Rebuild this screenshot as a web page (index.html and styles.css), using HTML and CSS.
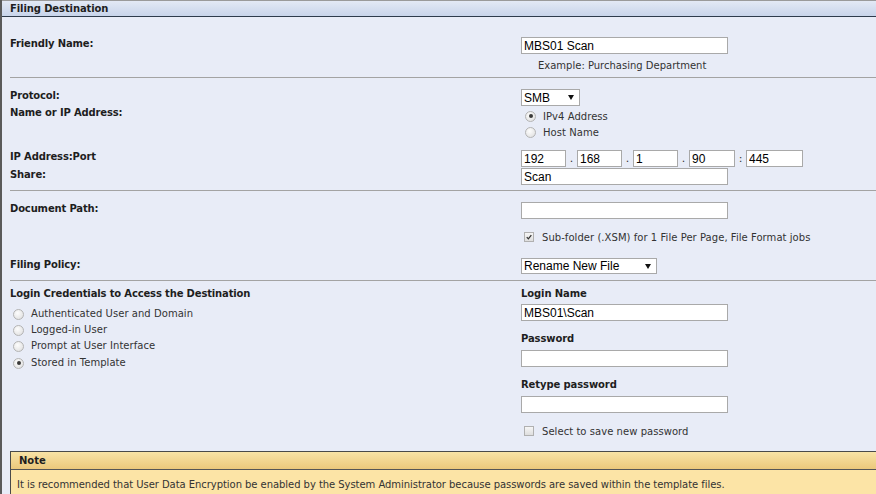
FILE: index.html
```html
<!DOCTYPE html>
<html>
<head>
<meta charset="utf-8">
<link rel="stylesheet" href="styles.css">
</head>
<body>
<div class="panel">
  <div class="panel-head">Filing Destination</div>
  <div class="panel-body">
    <section class="sec sec1">
      <div class="row">
        <div class="lbl">Friendly Name:</div>
        <div class="fld">
          <input class="txt w207" type="text" value="MBS01 Scan">
          <div class="hint">Example: Purchasing Department</div>
        </div>
      </div>
    </section>

    <section class="sec sec2">
      <div class="row">
        <div class="lbl">Protocol:</div>
        <div class="fld">
          <div class="sel w59"><span>SMB</span><i class="arrow"></i></div>
        </div>
      </div>
      <div class="row">
        <div class="lbl">Name or IP Address:</div>
        <div class="fld">
          <div class="radios radios-r">
            <div class="opt"><span class="radio on"></span><span>IPv4 Address</span></div>
            <div class="opt"><span class="radio"></span><span>Host Name</span></div>
          </div>
        </div>
      </div>
      <div class="row row-ip">
        <div class="lbl">IP Address:Port</div>
        <div class="fld ip">
          <input class="txt w45" type="text" value="192"><span class="sep">.</span>
          <input class="txt w45" type="text" value="168"><span class="sep">.</span>
          <input class="txt w45" type="text" value="1"><span class="sep">.</span>
          <input class="txt w46" type="text" value="90"><span class="sep">:</span>
          <input class="txt w57" type="text" value="445">
        </div>
      </div>
      <div class="row row-share">
        <div class="lbl">Share:</div>
        <div class="fld">
          <input class="txt w207" type="text" value="Scan">
        </div>
      </div>
    </section>

    <section class="sec sec3">
      <div class="row">
        <div class="lbl">Document Path:</div>
        <div class="fld">
          <input class="txt w207" type="text" value="">
          <div class="opt chk-row"><span class="check on"><svg viewBox="0 0 10 10" width="10" height="10"><path d="M2.2 5.2 L4.2 7.3 L7.9 2.6" fill="none" stroke="#333" stroke-width="1.6"/></svg></span><span>Sub-folder (.XSM) for 1 File Per Page, File Format jobs</span></div>
        </div>
      </div>
      <div class="row row-policy">
        <div class="lbl">Filing Policy:</div>
        <div class="fld">
          <div class="sel w136"><span>Rename New File</span><i class="arrow"></i></div>
        </div>
      </div>
    </section>

    <section class="sec sec4">
      <div class="row">
        <div class="lbl">
          <div>Login Credentials to Access the Destination</div>
          <div class="radios radios-l">
            <div class="opt"><span class="radio"></span><span>Authenticated User and Domain</span></div>
            <div class="opt"><span class="radio"></span><span>Logged-in User</span></div>
            <div class="opt"><span class="radio"></span><span>Prompt at User Interface</span></div>
            <div class="opt opt-last"><span class="radio on"></span><span>Stored in Template</span></div>
          </div>
        </div>
        <div class="fld">
          <div class="flbl">Login Name</div>
          <input class="txt w207 mt4" type="text" value="MBS01\Scan">
          <div class="flbl mt11">Password</div>
          <input class="txt w207 mt5" type="password" value="">
          <div class="flbl mt11">Retype password</div>
          <input class="txt w207 mt5" type="password" value="">
          <div class="opt chk-row"><span class="check"></span><span>Select to save new password</span></div>
        </div>
      </div>
    </section>

    <div class="note">
      <div class="note-head">Note</div>
      <div class="note-body">It is recommended that User Data Encryption be enabled by the System Administrator because passwords are saved within the template files.</div>
    </div>
  </div>
</div>
</body>
</html>
```

FILE: styles.css
```css
html, body {
  margin: 0;
  padding: 0;
}
body {
  width: 876px;
  height: 494px;
  overflow: hidden;
  background: #e8ecf7;
  font-family: "DejaVu Sans", Verdana, sans-serif;
  font-size: 10px;
  color: #333;
}
.panel {
  height: 494px;
  border-left: 2px solid #5a5a5a;
  background: #e8ecf7;
  box-sizing: border-box;
}
.panel-head {
  height: 15px;
  line-height: 16px;
  border-top: 1px solid #9a9a9a;
  border-bottom: 1px solid #2e3b4c;
  background: linear-gradient(#e3e9f5, #c8d4ea);
  padding-left: 8px;
  font-weight: bold;
  letter-spacing: -0.1px;
  color: #1e1e1e;
}
.panel-body {
  padding-left: 8px;
}
.sec {
  border-bottom: 1px solid #a3a3a3;
}
.sec1 { padding: 20px 0 4px; }
.sec2 { padding: 11px 0 5px; }
.sec3 { padding: 11px 0 6px; }
.sec4 { padding: 6px 0 0; border-bottom: none; }

.row {
  display: flex;
  align-items: flex-start;
}
.lbl {
  width: 511px;
  flex: none;
  padding-top: 1px;
  line-height: 12px;
  font-weight: bold;
  letter-spacing: -0.15px;
  color: #1e1e1e;
}
.lbl .radios { font-weight: normal; letter-spacing: 0; }
.fld {
  flex: none;
}
.txt {
  display: block;
  box-sizing: border-box;
  height: 17px;
  margin: 0;
  padding: 0 2px;
  border: 1px solid #a9a9a9;
  background: #fff;
  font-family: "Liberation Sans", Arial, sans-serif;
  font-size: 12px;
  color: #000;
  outline: none;
}
.w207 { width: 207px; }
.w45 { width: 45px; }
.w46 { width: 46px; }
.w57 { width: 57px; }
.mt4 { margin-top: 4px; }
.mt5 { margin-top: 5px; }
.mt11 { margin-top: 11px; }
.hint {
  margin-top: 5px;
  padding-left: 17px;
  line-height: 14px;
  color: #333;
}
.sel {
  box-sizing: border-box;
  height: 17px;
  border: 1px solid #a9a9a9;
  background: #fff;
  display: flex;
  align-items: center;
  justify-content: space-between;
  padding: 0 5px 0 2px;
  font-family: "Liberation Sans", Arial, sans-serif;
  font-size: 12px;
  color: #000;
}
.w59 { width: 59px; }
.w136 { width: 136px; height: 16px; }
.arrow {
  width: 0;
  height: 0;
  border-left: 3px solid transparent;
  border-right: 3px solid transparent;
  border-top: 5px solid #111;
}
.radios-r { padding-top: 2px; padding-left: 4px; }
.radios-l { margin-top: 6px; padding-left: 3px; }
.opt {
  display: flex;
  align-items: center;
  height: 16px;
  color: #333;
  letter-spacing: 0.05px;
}
.opt-last { margin-top: 1px; }
.radio {
  width: 11px;
  height: 11px;
  box-sizing: border-box;
  border-radius: 50%;
  border: 1px solid #b4b4b4;
  background: radial-gradient(circle at 40% 35%, #fdfdfd, #dcdcdc);
  margin-right: 7px;
  flex: none;
  position: relative;
}
.radio.on::after {
  content: "";
  position: absolute;
  left: 2.5px;
  top: 2.5px;
  width: 4px;
  height: 4px;
  border-radius: 50%;
  background: #3a3a3a;
}
.ip {
  display: flex;
  align-items: center;
}
.sep {
  width: 11px;
  text-align: center;
  color: #333;
  font-size: 11px;
}
.row-ip { margin-top: 10px; }
.row-share { margin-top: 1px; }
.chk-row {
  margin-top: 11px;
  height: 14px;
  padding-left: 3px;
}
.check {
  width: 10px;
  height: 10px;
  box-sizing: border-box;
  border: 1px solid #b0b0b0;
  background: linear-gradient(#f6f6f6, #dedede);
  margin-right: 8px;
  flex: none;
  display: flex;
  align-items: center;
  justify-content: center;
}
.check svg { display: block; }
.row-policy { margin-top: 14px; }
.flbl {
  padding-top: 1px;
  line-height: 12px;
  font-weight: bold;
  letter-spacing: -0.1px;
  color: #1e1e1e;
}
.note {
  margin-top: 13px;
  border-top: 1px solid #4a4a4a;
  border-left: 1px solid #4a4a4a;
  background: #fce4a6;
}
.note-head {
  height: 17px;
  line-height: 17px;
  border-bottom: 1px solid #555;
  background: linear-gradient(#f9e3a6, #ebc87b);
  padding-left: 8px;
  font-weight: bold;
  color: #1e1e1e;
}
.note-body {
  padding: 8px 0 10px 6px;
  line-height: 14px;
  color: #333;
  letter-spacing: -0.05px;
  white-space: nowrap;
}
```
